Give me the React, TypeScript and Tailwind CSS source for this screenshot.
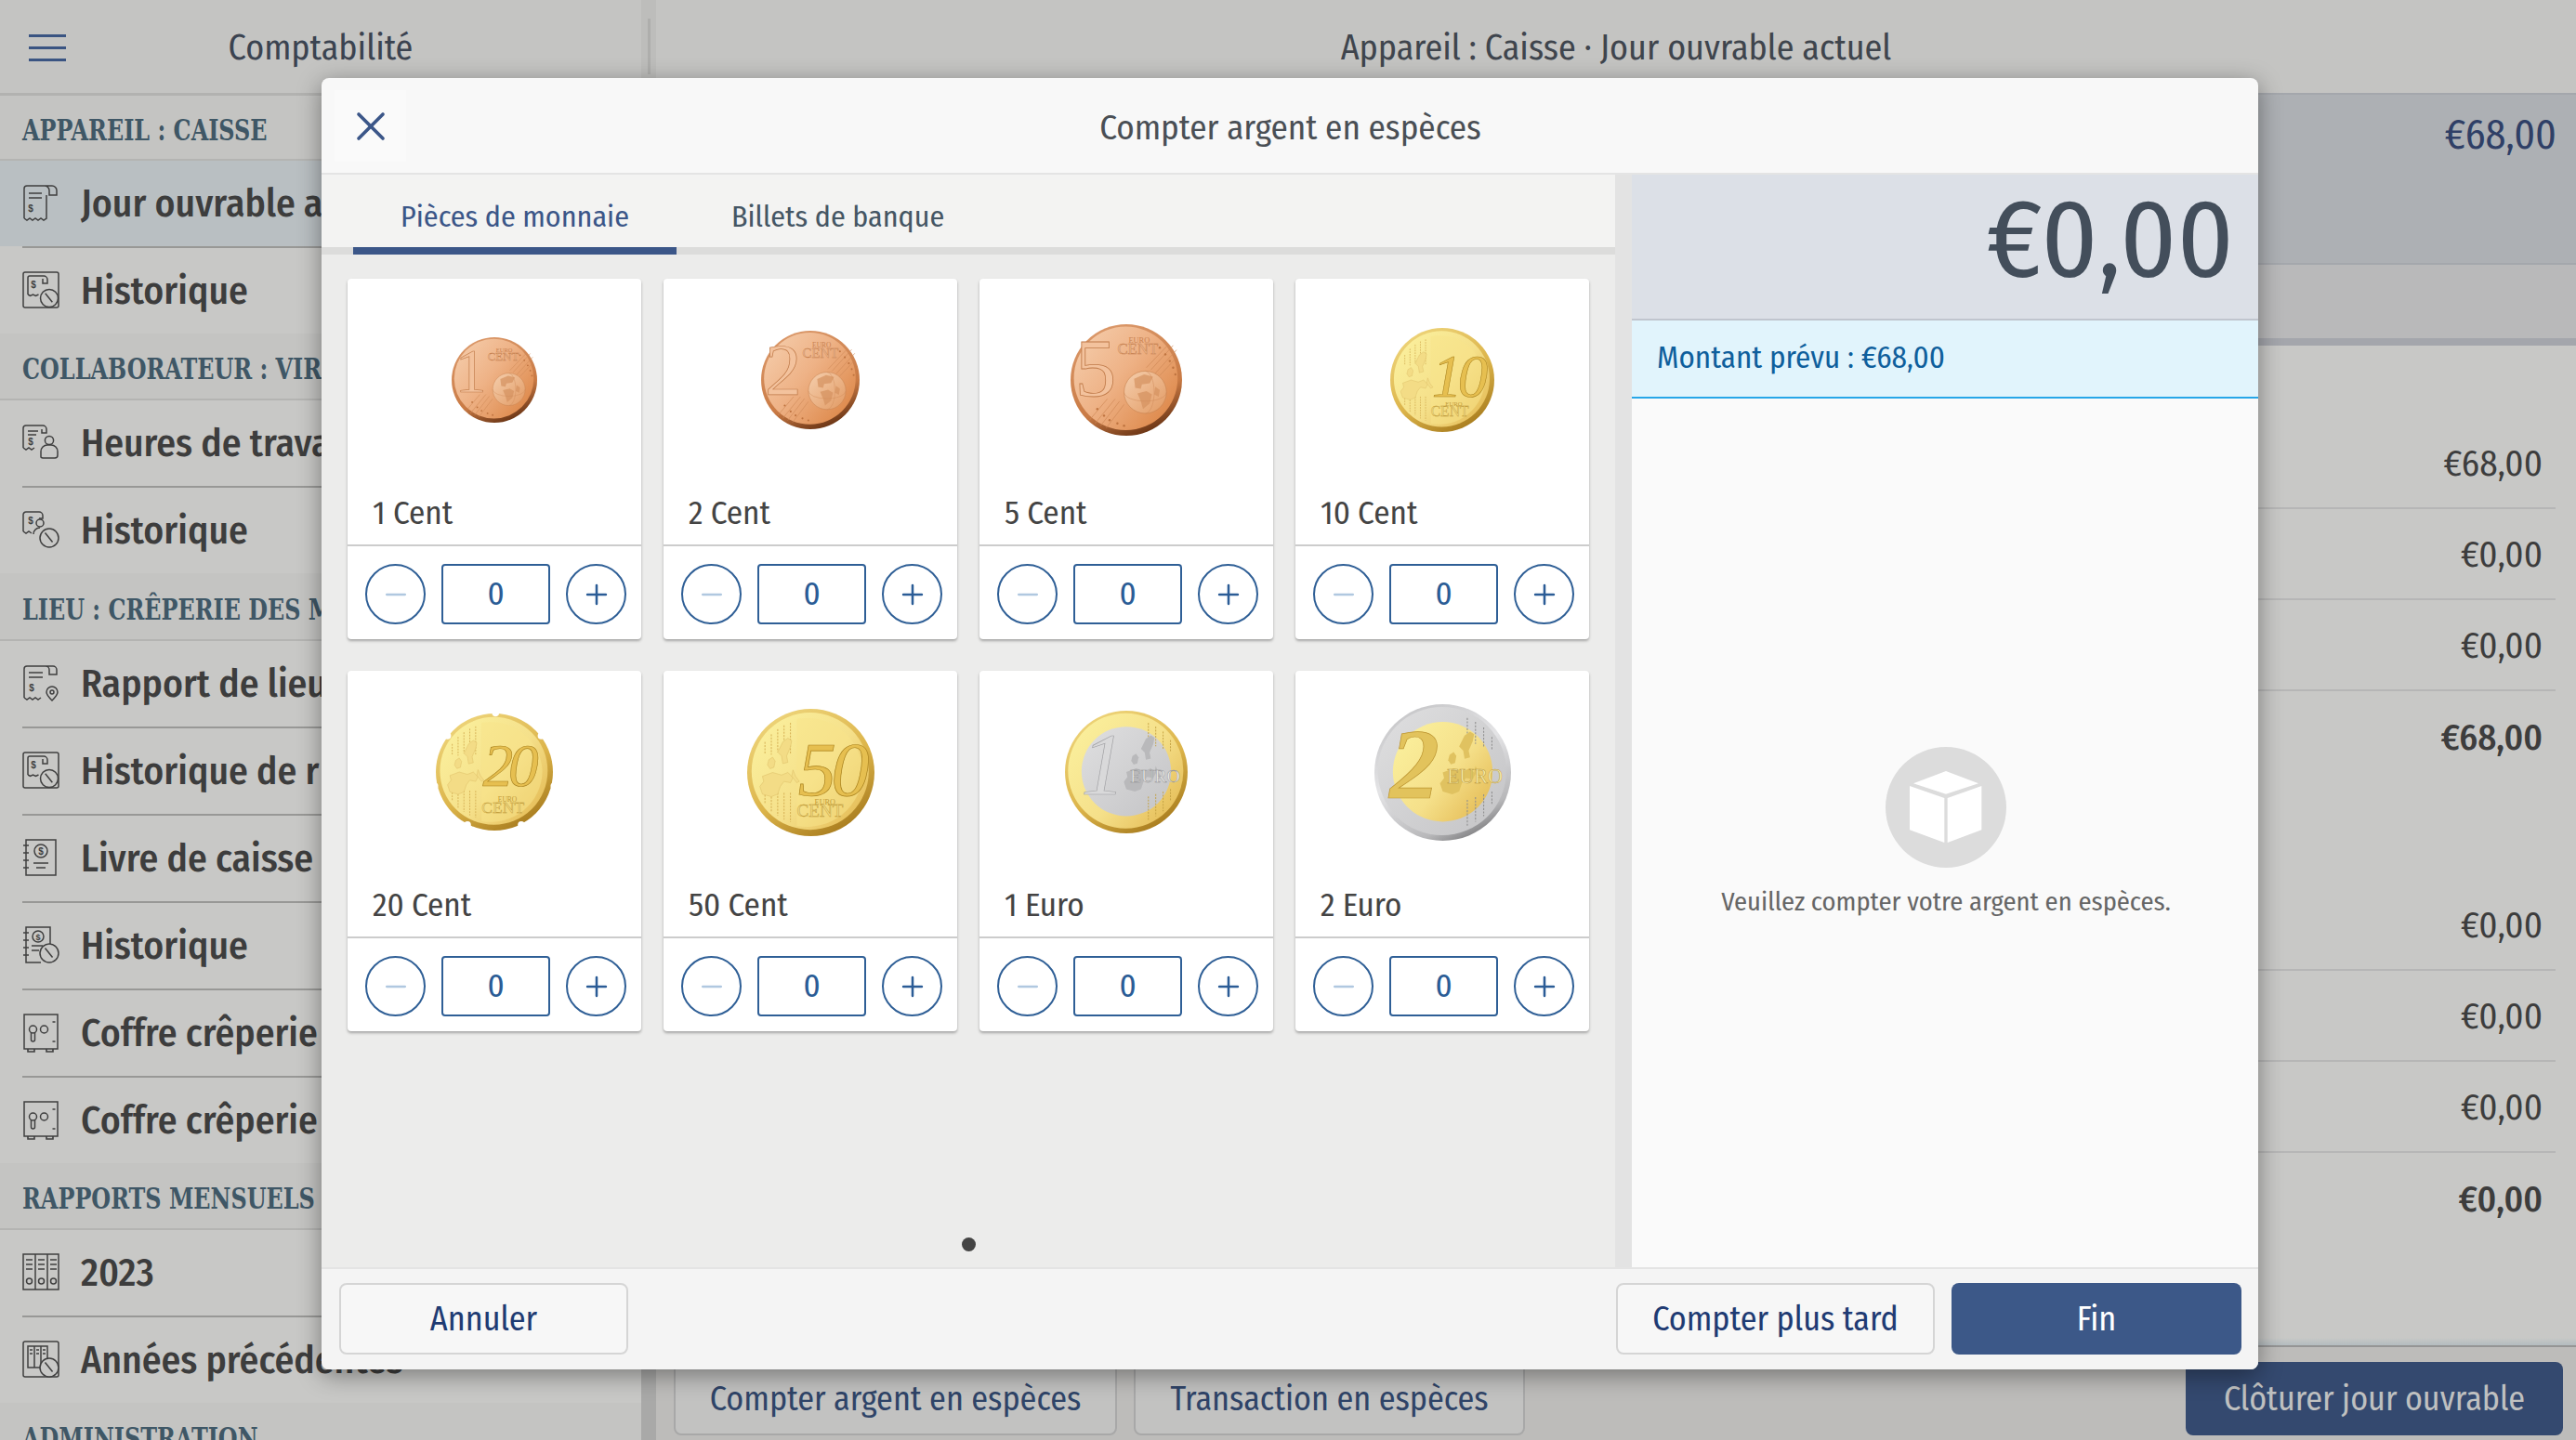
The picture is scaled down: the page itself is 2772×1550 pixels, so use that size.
import { Minus, Plus, X } from 'lucide-react'
import type { ReactNode } from 'react'

const ROW_BG = '#c8c8c6'

// --- sidebar icons, all on a 40 grid ---

const clock = (cx: number, cy: number, r: number, bg = ROW_BG) => (
  <>
    <circle cx={cx} cy={cy} r={r} fill={bg} />
    <path d={`M${cx - r * 0.45} ${cy - r * 0.55}L${cx + r * 0.35} ${cy + r * 0.45}`} />
  </>
)

const dollar = (x: number, y: number, size = 10) => (
  <text x={x} y={y} fontSize={size} fontWeight={700} fill="#3f3f3f" stroke="none" textAnchor="middle" fontFamily="Liberation Sans, sans-serif">$</text>
)

const person = (
  <>
    <circle cx="29" cy="18" r="4.6" fill={ROW_BG} />
    <path d="M20 36v-6a7 7 0 0 1 7-7h4a7 7 0 0 1 7 7v4a3 3 0 0 1-3 3H23a3 3 0 0 1-3-1z" fill={ROW_BG} />
  </>
)

const ICONS: Record<string, ReactNode> = {
  receipt: (
    <>
      <path d="M2 37V5a3 3 0 0 1 3-3h27a5 5 0 0 1 5 5v5h-8V7a5 5 0 0 0-5-5" />
      <path d="M2 37l3 2 3-2 3 2 3-2 3 2 3-2 3 2 3-2V12" />
      <path d="M7 10h14M7 15h14" />
      {dollar(9, 30)}
    </>
  ),
  receiptHistory: (
    <>
      <rect x="1" y="1" width="38" height="38" rx="2" />
      <path d="M6 25V7a2 2 0 0 1 2-2h15a4 4 0 0 1 4 4v4h-5V8M6 25l2.500 1.500 3-1.500 3 1.500 3-1.500" />
      {dollar(12, 18)}
      {clock(29, 29, 9.500)}
    </>
  ),
  receiptPerson: (
    <>
      <path d="M1 26V5a3 3 0 0 1 3-3h18a4 4 0 0 1 4 4v4h-5V6" />
      <path d="M1 26l3 2 3-2 3 2 3-2" />
      <path d="M6 8h11M6 12h9" />
      {dollar(9, 23)}
      {person}
    </>
  ),
  personHistory: (
    <>
      <path d="M1 22V4a3 3 0 0 1 3-3h14a4 4 0 0 1 4 4v3h-4" />
      <path d="M1 22l3 2 3-2 3 2" />
      {dollar(9, 14)}
      <circle cx="19" cy="13" r="4" fill={ROW_BG} />
      <path d="M12 25a7 7 0 0 1 7-7" />
      {clock(29, 29, 10)}
    </>
  ),
  receiptPin: (
    <>
      <path d="M2 36V5a3 3 0 0 1 3-3h28a4 4 0 0 1 4 4v5h-8V6a4 4 0 0 0-4-4" />
      <path d="M2 36l3 2 3-2 3 2 3-2 3 2 3-2" />
      <path d="M7 9h15M7 14h15" />
      {dollar(10, 29)}
      <path d="M32 39c-3-3-6-6-6-9a6 6 0 0 1 12 0c0 3-3 6-6 9z" fill={ROW_BG} />
      <circle cx="32" cy="30" r="2" />
    </>
  ),
  ledger: (
    <>
      <rect x="4" y="1" width="32" height="38" />
      <path d="M1 7h6M1 15h6M1 23h6M1 31h6" />
      <circle cx="20" cy="13" r="7" />
      {dollar(20, 17, 10)}
      <path d="M12 26h16M15 31h10" />
    </>
  ),
  ledgerHistory: (
    <>
      <path d="M30 20V1H4v38h16" />
      <path d="M1 7h6M1 15h6M1 23h6M1 31h6" />
      <circle cx="17" cy="11" r="6" />
      {dollar(17, 15, 9)}
      <path d="M10 21h12M10 26h8" />
      {clock(29, 29, 10)}
    </>
  ),
  safe: (
    <>
      <rect x="2" y="1" width="36" height="37" />
      <path d="M6 38v3h7v-3M26 38v3h7v-3" strokeWidth={1.6} />
      <circle cx="11.500" cy="17" r="4" />
      <path d="M9.500 20v8a2 2 0 0 0 4 0v-8" />
      <circle cx="23.500" cy="17" r="4" />
      <path d="M32.500 9h3M32.500 30h3" />
    </>
  ),
  binders: (
    <>
      <rect x="1" y="1" width="38" height="38" />
      <path d="M14 1v38M27 1v38" />
      <path d="M4 7h7M4 12h7M4 17h7M17 7h7M17 12h7M17 17h7M30 7h7M30 12h7M30 17h7" />
      <circle cx="7.500" cy="30" r="3" />
      <circle cx="20.500" cy="30" r="3" />
      <circle cx="33.500" cy="30" r="3" />
    </>
  ),
  bindersHistory: (
    <>
      <rect x="1" y="1" width="38" height="38" rx="2" />
      <rect x="6" y="6" width="21" height="23" />
      <path d="M13 6v23M20 6v23M8 10h3M8 14h3M15 10h3M15 14h3M22 10h3M22 14h3" />
      {clock(29, 29, 10)}
    </>
  ),
}

function SideIcon({ name }: { name: string }) {
  return (
    <svg viewBox="0 0 40 42" width="40" height="42" fill="none" stroke="#3f3f3f" strokeWidth="1.5" className="shrink-0">
      {ICONS[name]}
    </svg>
  )
}

// --- coins ---

type CoinKind = 'copper' | 'gold' | 'euro1' | 'euro2'

function Stars({ points, fill }: { points: number[][]; fill: string }) {
  return (
    <>
      {points.map(([x, y]) => (
        <circle key={`${x}-${y}`} cx={x} cy={y} r="1" fill={fill} />
      ))}
    </>
  )
}

function EuroMap({ fill, x = 0, y = 0, stroke }: { fill: string; x?: number; y?: number; stroke?: string }) {
  return (
    <g transform={`translate(${x} ${y})`} fill={fill} stroke={stroke} strokeWidth="0.3">
      <path d="M20 4l4-3 3 2-1 5-3 7 1 5-4 1-1-6-3-3z" />
      <path d="M9 18l3-2 2 3-1 5-3 1-2-3z" />
      <path d="M4 31l8-3 7 2 5-2 4 4-2 4-5-1-3 4-2 6-5 2-7-2-2-6 3-4z" />
      <path d="M28 26l2 5 3 4-2 1-4-5z" />
    </g>
  )
}

const GOLD_NUM: Record<string, { size: number; y: number }> = {
  '10': { size: 58, y: 66 },
  '20': { size: 52, y: 62 },
  '50': { size: 60, y: 68 },
}

function Coin({ kind, id, size, label, notched }: { kind: CoinKind; id: string; size: number; label: string; notched?: boolean }) {
  const serif = 'Liberation Serif, serif'
  const goldNum = GOLD_NUM[label]
  return (
    <svg viewBox="0 0 100 100" width={size} height={size}>
      <defs>
        <linearGradient id={`${id}-copper`} x1="0" y1="0" x2="1" y2="0.8">
          <stop offset="0" stopColor="#f6d0b0" />
          <stop offset="0.5" stopColor="#eeb286" />
          <stop offset="1" stopColor="#dd8748" />
        </linearGradient>
        <linearGradient id={`${id}-copperRim`} x1="0.2" y1="0" x2="0.6" y2="1">
          <stop offset="0" stopColor="#dc9a6c" />
          <stop offset="0.7" stopColor="#c97a44" />
          <stop offset="1" stopColor="#6e3716" />
        </linearGradient>
        <linearGradient id={`${id}-globe`} x1="0" y1="0" x2="1" y2="1">
          <stop offset="0" stopColor="#f5cfae" />
          <stop offset="1" stopColor="#e29a63" />
        </linearGradient>
        <linearGradient id={`${id}-gold`} x1="0" y1="0.1" x2="1" y2="0.9">
          <stop offset="0" stopColor="#fbf19e" />
          <stop offset="0.55" stopColor="#f5e08a" />
          <stop offset="1" stopColor="#e3b850" />
        </linearGradient>
        <linearGradient id={`${id}-goldRim`} x1="0.1" y1="0" x2="0.7" y2="1">
          <stop offset="0" stopColor="#f0d880" />
          <stop offset="0.6" stopColor="#dcb44a" />
          <stop offset="1" stopColor="#a87c1e" />
        </linearGradient>
        <linearGradient id={`${id}-silver`} x1="0" y1="0" x2="1" y2="1">
          <stop offset="0" stopColor="#dfdfe0" />
          <stop offset="1" stopColor="#c4c4c6" />
        </linearGradient>
        <linearGradient id={`${id}-silverRim`} x1="0.2" y1="0" x2="0.7" y2="1">
          <stop offset="0" stopColor="#c4c4c6" />
          <stop offset="0.45" stopColor="#e4e4e6" />
          <stop offset="0.85" stopColor="#b8b8ba" />
          <stop offset="1" stopColor="#7c7c7e" />
        </linearGradient>
      </defs>

      {kind === 'copper' && (
        <>
          <circle cx="50" cy="50" r="50" fill={`url(#${id}-copperRim)`} />
          <circle cx="49.500" cy="48.500" r="46.500" fill={`url(#${id}-copper)`} />
          <text x="4" y="64" fontFamily={serif} fontSize="74" fill="#f3c29d" stroke="#c07b4a" strokeWidth="0.7">{label}</text>
          <text x="52" y="17" fontFamily={serif} fontSize="7" fill="#c98250">EURO</text>
          <text x="42" y="27" fontFamily={serif} fontSize="14" fill="#eab68f" stroke="#c47c4a" strokeWidth="0.35">CENT</text>
          <path d="M72 41l20-22M76 44l19-21M80 46l14-15M68 39l19-20M22 89l18-22M27 91l17-22M32 93l16-21M17 86l16-19" stroke="#cf8a58" strokeWidth="0.6" />
          <Stars fill="#bf7440" points={[[80, 21], [85, 27], [89, 33], [92, 39], [94, 45], [24, 76], [30, 82], [35, 86], [42, 89], [48, 91]]} />
          <circle cx="67" cy="61" r="19" fill={`url(#${id}-globe)`} stroke="#c78351" strokeWidth="0.5" />
          <path d="M57 49l9-4 8 2-3 6-7 1-1 4-5-1zM60 62l8-2 5 3-2 8-6 5-2-7zM76 56l4 3-1 6-4-2z" fill="#d4925f" opacity="0.7" />
          <path d="M48 61a19 8 0 0 0 38 0M67 42a8 19 0 0 1 0 38" fill="none" stroke="#cf8a58" strokeWidth="0.4" />
        </>
      )}

      {kind === 'gold' && (
        <>
          <circle cx="50" cy="50" r="50" fill={`url(#${id}-goldRim)`} />
          <circle cx="49.500" cy="49" r="46" fill={`url(#${id}-gold)`} />
          <path d="M39 8a44 44 0 0 1 52 41a44 44 0 0 1-52 43z" fill="#f8e38b" opacity="0.55" />
          <path d="M14 26v10M19 20v16M24 16v18M29 13v22M34 11v24M14 65v10M19 64v17M24 66v18M29 66v21M34 66v23" stroke="#d4ae52" strokeWidth="0.7" strokeDasharray="1.500 1" fill="none" />
          <EuroMap fill="#f3dc86" stroke="#d6b55c" x={8} y={22} />
          <text x="40" y={goldNum.y} fontFamily={serif} fontStyle="italic" fontSize={goldNum.size} letterSpacing="-4" fill="#e6bf50" stroke="#a9821e" strokeWidth="0.5">{label}</text>
          <text x="53" y="75" fontFamily={serif} fontSize="6" fill="#c29a38">EURO</text>
          <text x="39" y="85" fontFamily={serif} fontSize="14" fill="#f0d981" stroke="#bb9431" strokeWidth="0.3">CENT</text>
          {notched && (
            <>
              <circle cx="51" cy="-0.500" r="3" fill="#fff" />
              <circle cx="90" cy="19" r="3" fill="#fff" />
              <circle cx="101" cy="62" r="3" fill="#fff" />
              <circle cx="73" cy="95" r="3" fill="#fff" />
              <circle cx="27" cy="95" r="3" fill="#fff" />
              <circle cx="-1" cy="62" r="3" fill="#fff" />
              <circle cx="10" cy="19" r="3" fill="#fff" />
            </>
          )}
        </>
      )}

      {(kind === 'euro1' || kind === 'euro2') && (
        <>
          <circle cx="50" cy="50" r="50" fill={kind === 'euro1' ? `url(#${id}-goldRim)` : `url(#${id}-silverRim)`} />
          <circle cx="49.500" cy="49" r="47" fill={kind === 'euro1' ? `url(#${id}-gold)` : `url(#${id}-silver)`} />
          <circle cx="50" cy="49.500" r="36.500" fill={kind === 'euro1' ? `url(#${id}-silver)` : `url(#${id}-gold)`} />
          <path d="M68 10v16M74 13v16M80 17v14M86 24v10M68 70v20M74 68v18M80 66v16M86 64v10" stroke={kind === 'euro1' ? '#c2a040' : '#8d8d8d'} strokeWidth="0.7" strokeDasharray="1.500 1" fill="none" />
          <EuroMap fill={kind === 'euro1' ? '#b9b9bb' : '#e0c260'} x={46} y={19} />
          <text x={kind === 'euro1' ? 13 : 11} y={kind === 'euro1' ? 68 : 69} fontFamily={serif} fontStyle="italic" fontWeight={kind === 'euro1' ? 400 : 700} fontSize={kind === 'euro1' ? 72 : 73} fill={kind === 'euro1' ? '#d9d9da' : '#e2c35c'} stroke={kind === 'euro1' ? '#9f9fa2' : '#bd9633'} strokeWidth="0.5">{label}</text>
          <text x="53" y="58" fontFamily={serif} fontSize="15" fill={kind === 'euro1' ? '#eeeeea' : '#f9efab'} stroke={kind === 'euro1' ? '#8f8f92' : '#b8963c'} strokeWidth="0.35">EURO</text>
        </>
      )}
    </svg>
  )
}

// --- modal parts ---

const COINS: { label: string; num: string; kind: CoinKind; size: number; notched?: boolean }[] = [
  { label: '1 Cent', num: '1', kind: 'copper', size: 92 },
  { label: '2 Cent', num: '2', kind: 'copper', size: 106 },
  { label: '5 Cent', num: '5', kind: 'copper', size: 120 },
  { label: '10 Cent', num: '10', kind: 'gold', size: 112 },
  { label: '20 Cent', num: '20', kind: 'gold', size: 126, notched: true },
  { label: '50 Cent', num: '50', kind: 'gold', size: 137 },
  { label: '1 Euro', num: '1', kind: 'euro1', size: 132 },
  { label: '2 Euro', num: '2', kind: 'euro2', size: 147 },
]

function CoinCard({ coin, index }: { coin: (typeof COINS)[number]; index: number }) {
  return (
    <div className="flex h-[388px] flex-col rounded-[4px] bg-white shadow-[0_2px_3px_rgba(0,0,0,0.3)]">
      <div className="flex h-[218px] items-center justify-center">
        <Coin kind={coin.kind} id={`coin${index}`} size={coin.size} label={coin.num} notched={coin.notched} />
      </div>
      <div className="flex h-[68px] items-center px-[27px] text-[35px] text-[#444444]">{coin.label}</div>
      <div className="flex flex-1 items-center justify-between border-t-2 border-[#cccccc] pt-[3px] pr-[16px] pl-[19px]">
        <button className="flex h-[65px] w-[65px] items-center justify-center rounded-full border-2 border-[#2f5f96] text-[#b0c8e0]">
          <Minus size={34} strokeWidth={1.6} />
        </button>
        <div className="flex h-[65px] w-[117px] items-center justify-center rounded-[4px] border-2 border-[#2f5f96] text-[35px] text-[#2b5c96]">0</div>
        <button className="flex h-[65px] w-[65px] items-center justify-center rounded-full border-2 border-[#2f5f96] text-[#2b5c96]">
          <Plus size={34} strokeWidth={1.8} />
        </button>
      </div>
    </div>
  )
}

function CashModal() {
  return (
    <div className="absolute top-[84px] left-[346px] flex h-[1390px] w-[2084px] flex-col overflow-hidden rounded-[8px] bg-[#f8f8f8] shadow-[0_6px_26px_rgba(0,0,0,0.4)]">
      <div className="flex h-[104px] shrink-0 items-center border-b-2 border-[#e4e4e4] pl-[14px]">
        <button className="flex h-[77px] w-[77px] items-center justify-center bg-[#fafafa] pt-[2px] text-[#3b5688]">
          <X size={52} strokeWidth={1.7} />
        </button>
        <div className="flex-1 pt-[5px] pr-[90px] text-center text-[37px] text-[#4a4f55]">Compter argent en espèces</div>
      </div>

      <div className="flex min-h-0 flex-1">
        <div className="flex w-[1392px] flex-col">
          <div className="flex h-[86px] shrink-0 items-stretch border-b-[8px] border-[#dcdcdb] bg-[#f3f3f2] pl-[34px]">
            <div className="-mb-[8px] flex w-[348px] items-center justify-center border-b-[8px] border-[#3b5688] pt-[11px] text-[32px] text-[#3b5688]">Pièces de monnaie</div>
            <div className="flex items-center pt-[11px] pl-[59px] text-[32px] text-[#455664]">Billets de banque</div>
          </div>
          <div className="flex min-h-0 flex-1 flex-col items-center bg-[#ececeb] pt-[26px] pb-[17px]">
            <div className="grid grid-cols-[repeat(4,316px)] gap-x-[24px] gap-y-[34px]">
              {COINS.map((coin, i) => (
                <CoinCard key={coin.label} coin={coin} index={i} />
              ))}
            </div>
            <div className="mt-auto h-[15px] w-[15px] rounded-full bg-[#444444]" />
          </div>
        </div>

        <div className="w-[18px] bg-[#e3e3e3]" />

        <div className="flex flex-1 flex-col bg-[#fafafa]">
          <div className="flex h-[157px] items-center justify-end border-b-2 border-[#c0c5ce] bg-[#dce0e7] pr-[26px] pb-[16px] text-[118px] leading-none text-[#434e5b]">€0,00</div>
          <div className="flex h-[84px] items-center border-b-2 border-[#27a6e8] bg-[#e1f4fc] pl-[27px] text-[33px] text-[#0f5f9c]">Montant prévu : €68,00</div>
          <div className="flex flex-col items-center pt-[375px] pl-[2px]">
            <svg viewBox="0 0 390 390" width="130" height="130">
              <circle cx="195" cy="195" r="195" fill="#dcdcdc" />
              <path d="M195 78l105 40-105 34-105-34z" fill="#fff" />
              <path d="M78 126l112 39v144l-112-41z" fill="#fff" />
              <path d="M200 165l110-39v142l-110 41z" fill="#fff" />
            </svg>
            <div className="mt-[19px] text-[28.500px] leading-[36px] text-[#666666]">Veuillez compter votre argent en espèces.</div>
          </div>
        </div>
      </div>

      <div className="flex h-[110px] shrink-0 items-center justify-between border-t-2 border-[#e4e4e4] bg-[#f4f4f4] pr-[18px] pb-[2px] pl-[19px]">
        <button className="h-[77px] w-[311px] rounded-[8px] border-2 border-[#d5d5d5] bg-[#f7f7f7] pt-[2px] text-[36px] text-[#1f3b73]">Annuler</button>
        <div className="flex gap-[18px]">
          <button className="h-[77px] w-[343px] rounded-[8px] border-2 border-[#d5d5d5] bg-[#f7f7f7] pt-[2px] text-[36px] text-[#1f3b73]">Compter plus tard</button>
          <button className="h-[77px] w-[312px] rounded-[8px] bg-[#3c5888] pt-[2px] text-[36px] text-white">Fin</button>
        </div>
      </div>
    </div>
  )
}

// --- page behind the modal ---

const NAV = [
  {
    title: 'APPAREIL : CAISSE',
    head: 'h-[70px]',
    items: [
      { label: 'Jour ouvrable actuel', icon: 'receipt', active: true },
      { label: 'Historique', icon: 'receiptHistory' },
    ],
  },
  {
    title: 'COLLABORATEUR : VIR',
    head: 'h-[72px]',
    items: [
      { label: 'Heures de travail', icon: 'receiptPerson' },
      { label: 'Historique', icon: 'personHistory' },
    ],
  },
  {
    title: 'LIEU : CRÊPERIE DES M',
    head: 'h-[73px]',
    items: [
      { label: 'Rapport de lieu', icon: 'receiptPin' },
      { label: 'Historique de r', icon: 'receiptHistory' },
      { label: 'Livre de caisse', icon: 'ledger' },
      { label: 'Historique', icon: 'ledgerHistory' },
      { label: 'Coffre crêperie', icon: 'safe' },
      { label: 'Coffre crêperie', icon: 'safe' },
    ],
  },
  {
    title: 'RAPPORTS MENSUELS',
    head: 'h-[72px]',
    items: [
      { label: '2023', icon: 'binders' },
      { label: 'Années précédentes', icon: 'bindersHistory' },
    ],
  },
  { title: 'ADMINISTRATION', head: 'h-[72px]', items: [] },
]

function Sidebar() {
  return (
    <div className="flex h-full w-[690px] shrink-0 flex-col overflow-hidden bg-[#c8c8c6]">
      <div className="relative flex h-[103px] shrink-0 items-center justify-center border-b-[3px] border-[#b2b2b0] bg-[#c4c4c2] pt-[2px] text-[38px] text-[#3b4350]">
        <div className="absolute top-[37px] left-[31px] flex w-[40px] flex-col gap-[10px]">
          <span className="h-[3px] bg-[#3a5482]" />
          <span className="h-[3px] bg-[#3a5482]" />
          <span className="h-[3px] bg-[#3a5482]" />
        </div>
        Comptabilité
      </div>
      {NAV.map((section) => (
        <div key={section.title} className="shrink-0">
          <div className={`${section.head} flex items-center border-b-2 border-[#b4b4b2] bg-[#c4c4c2] pt-[6px] pl-[24px] text-[#3f5766]`}>
            <span className="origin-left scale-x-[0.83] font-['DejaVu_Serif_Condensed','Liberation_Serif',serif] text-[32px] font-bold whitespace-nowrap">{section.title}</span>
          </div>
          {section.items.map((item, i) => (
            <div key={item.label + i}>
              {i > 0 && <div className="ml-[24px] h-[2px] bg-[#989896]" />}
              <div className={`flex h-[92px] items-center gap-[23px] pl-[24px] text-[41.500px] font-medium whitespace-nowrap text-[#3d3d3d] ${item.active ? 'bg-[#b9bfc2]' : ''}`}>
                <SideIcon name={item.icon} />
                <span>{item.label}</span>
              </div>
            </div>
          ))}
        </div>
      ))}
    </div>
  )
}

function AmountRow({ value, bold, last }: { value: string; bold?: boolean; last?: boolean }) {
  return (
    <div className={`mr-[22px] flex h-[98px] items-center justify-end pt-[2px] pr-[14px] text-[39px] text-[#3d3d3d] ${bold ? 'font-medium' : ''} ${last ? '' : 'border-b-2 border-[#b6b6b6]'}`}>
      {value}
    </div>
  )
}

function MainPane() {
  return (
    <div className="flex h-full flex-1 flex-col bg-[#c8c8c6]">
      <div className="flex h-[100px] shrink-0 items-center justify-center bg-[#c4c4c2] pt-[2px] text-[38px] text-[#3f454d]">Appareil : Caisse · Jour ouvrable actuel</div>
      <div className="h-[185px] shrink-0 border-y-2 border-[#a4a7ac] bg-[#adb0b4] pt-[11px] pr-[21px] text-right text-[44px] text-[#2f3f66]">€68,00</div>
      <div className="h-[87px] shrink-0 border-b-[8px] border-[#a4a6ac] bg-[#b9b9ba]" />
      <div className="flex min-h-0 flex-1 flex-col pt-[78px]">
        <AmountRow value="€68,00" />
        <AmountRow value="€0,00" />
        <AmountRow value="€0,00" />
        <AmountRow value="€68,00" bold last />
        <div className="h-[105px]" />
        <AmountRow value="€0,00" />
        <AmountRow value="€0,00" />
        <AmountRow value="€0,00" />
        <AmountRow value="€0,00" bold last />
        <div className="mt-auto h-[8px] bg-gradient-to-b from-[#c8c8c6] to-[#b4bcc0]" />
      </div>
      <div className="flex h-[102px] shrink-0 items-start justify-between border-t-2 border-[#959595] bg-[#bdbcba] pt-[16px] pr-[14px] pl-[19px]">
        <div className="flex gap-[18px]">
          <button className="h-[79px] w-[477px] rounded-[8px] border-2 border-[#a8a8a8] bg-[#c2c2c1] text-[36px] text-[#2f4468]">Compter argent en espèces</button>
          <button className="h-[79px] w-[421px] rounded-[8px] border-2 border-[#a8a8a8] bg-[#c2c2c1] text-[36px] text-[#2f4468]">Transaction en espèces</button>
        </div>
        <button className="h-[79px] w-[406px] rounded-[8px] bg-[#34496f] text-[36px] text-[#bfc0c0]">Clôturer jour ouvrable</button>
      </div>
    </div>
  )
}

export default function App() {
  return (
    <div className="relative flex h-[1550px] w-[2772px] overflow-hidden font-['Fira_Sans_Condensed','Roboto_Condensed',sans-serif]">
      <Sidebar />
      <div className="flex w-[16px] shrink-0 flex-col bg-[#a9a9a8]">
        <div className="flex h-[100px] items-center justify-center bg-[#bdbdbb]">
          <div className="h-[60px] w-[3px] bg-[#aeaeac]" />
        </div>
      </div>
      <MainPane />
      <CashModal />
    </div>
  )
}
